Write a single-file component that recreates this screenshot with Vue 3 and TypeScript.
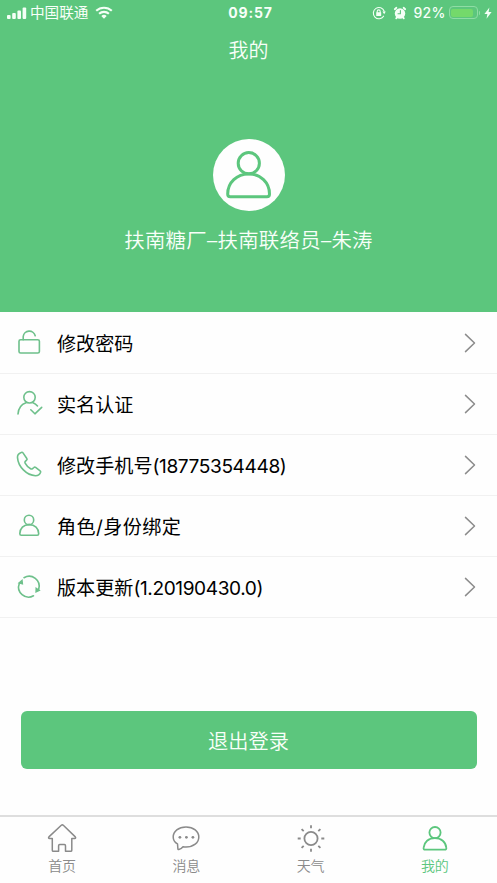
<script setup lang="ts">
  import { ref } from "vue";

  interface MenuItem {
    icon: string;
    label: string;
    extra?: string;
  }

  interface TabItem {
    key: string;
    label: string;
  }

  const userName = ref("扶南糖厂–扶南联络员–朱涛");
  const battery = ref(92);
  const activeTab = ref("mine");

  const menu: MenuItem[] = [
    { icon: "lock", label: "修改密码" },
    { icon: "verify", label: "实名认证" },
    { icon: "phone", label: "修改手机号", extra: "(18775354448)" },
    { icon: "role", label: "角色/身份绑定" },
    { icon: "update", label: "版本更新", extra: "(1.20190430.0)" },
  ];

  const tabs: TabItem[] = [
    { key: "home", label: "首页" },
    { key: "message", label: "消息" },
    { key: "weather", label: "天气" },
    { key: "mine", label: "我的" },
  ];
</script>

<template>
  <div class="page">
    <header class="header">
      <div class="status-bar">
        <div class="status-left">
          <svg class="signal" viewBox="0 0 20 12">
            <rect x="0" y="8" width="3.6" height="4" rx="1" />
            <rect x="5.2" y="6" width="3.6" height="6" rx="1" />
            <rect x="10.4" y="3.4" width="3.6" height="8.6" rx="1" />
            <rect x="15.6" y="0.6" width="3.6" height="11.4" rx="1" />
          </svg>
          <span class="carrier">中国联通</span>
          <svg class="wifi" viewBox="0 0 18 13">
            <path d="M1.2 4.8a11.4 11.4 0 0 1 15.6 0" />
            <path d="M4.1 7.8a7.2 7.2 0 0 1 9.8 0" />
            <path class="dot" d="M6.3 9.9a4 4 0 0 1 5.4 0L9 12.7z" />
          </svg>
        </div>
        <span class="time">09:57</span>
        <div class="status-right">
          <svg class="rotation" viewBox="0 0 14 14">
            <path d="M12.2 5.2a5.6 5.6 0 1 0-.6 5" />
            <path class="fill" d="M10.4 5.6h3.4l-1.6 2.6z" />
            <rect class="fill" x="4.2" y="6.2" width="5" height="3.8" rx=".5" />
            <path d="M5.2 6.5V5.4a1.5 1.5 0 0 1 3 0v1.1" />
          </svg>
          <svg class="alarm" viewBox="0 0 14 14">
            <circle cx="7" cy="7.5" r="5.2" />
            <path class="ear" d="M1.8 3.2 3.4 1.8M12.2 3.2l-1.6-1.4M3.2 12.4l1-1.2M10.8 12.4l-1-1.2" />
            <path class="hand" d="M7.4 4.6v3.2H5" />
          </svg>
          <span class="percent">{{ battery }}%</span>
          <div class="battery">
            <div class="level" :style="{ width: battery + '%' }"></div>
          </div>
          <span class="battery-tip"></span>
          <svg class="bolt" viewBox="0 0 8 12">
            <path d="M5.4.4.4 6.9h3L2.5 11.7 7.6 5H4.6z" />
          </svg>
        </div>
      </div>
      <h1 class="title">我的</h1>
      <div class="avatar">
        <svg viewBox="0 0 72 72">
          <circle cx="35.8" cy="24.2" r="10.6" />
          <path d="M17.3 57.8h36.6c1.9 0 2.6-1 2.6-2.8C56.5 43.5 47.5 34.9 35.7 34.9S14.7 43.5 14.7 55c0 1.8.7 2.8 2.6 2.8z" />
        </svg>
      </div>
      <p class="name">{{ userName }}</p>
    </header>

    <ul class="menu">
      <li v-for="item in menu" :key="item.icon" class="row" :class="item.icon">
        <svg class="row-icon" viewBox="0 0 30 30">
          <template v-if="item.icon === 'lock'">
            <rect x="5" y="11.7" width="20.4" height="13.3" rx="1.6" />
            <path d="M9.2 11.7V8.6a6.1 6.1 0 0 1 12-.8" />
          </template>
          <template v-else-if="item.icon === 'verify'">
            <circle cx="15.5" cy="8.3" r="5.7" />
            <path d="M4 25c.3-5.3 3.2-9.600 8-11.300M19 13.700c1.900.7 3.300 1.800 4.500 3.300" />
            <path d="m16.800 20.800 4.100 4 6.800-6.500" />
          </template>
          <template v-else-if="item.icon === 'phone'">
            <path d="M7.300 2.400C4.700 3.200 3.300 5 3.500 7.600 4.200 16.600 12.500 25.400 21.500 25.700c2.300 0 4.300-1.200 5.100-3.400.2-.6 0-1.100-.5-1.500l-4.500-3.400c-.6-.4-1.200-.4-1.700.1l-1.300 1.100c-.6.5-1.300.6-2 .2-2.500-1.500-4.300-3.300-5.500-5.600-.4-.7-.3-1.300.2-1.800l1.300-1.200c.6-.5.6-1.100.2-1.700L9 2.900c-.4-.6-1-.7-1.700-.5z" />
          </template>
          <template v-else-if="item.icon === 'role'">
            <circle cx="15" cy="8.900" r="4.700" />
            <path d="M7.300 24.200h15.900c1 0 1.500-.5 1.500-1.400 0-5.500-3.900-9.200-9.500-9.200s-9.400 3.700-9.400 9.200c0 .9.500 1.400 1.500 1.400z" />
          </template>
          <template v-else>
            <path d="M10 5.700a10 10 0 0 1 14.700 11.500M19.500 23.800A10 10 0 0 1 5.300 11.500" />
            <path class="solid" d="m3.600 11.300 5-4.300.6 5.800zM26.700 18.400l-5.400 2.500.2-6z" />
          </template>
        </svg>
        <span class="label">{{ item.label }}<span v-if="item.extra" class="extra">{{ item.extra }}</span></span>
        <svg class="arrow" viewBox="0 0 12 20">
          <path d="m1.500 1.400 9 8.600-9 8.600" />
        </svg>
      </li>
    </ul>

    <button class="logout">退出登录</button>

    <nav class="tabbar">
      <div
        v-for="tab in tabs"
        :key="tab.key"
        class="tab"
        :class="{ active: tab.key === activeTab }"
        @click="activeTab = tab.key"
      >
        <svg viewBox="0 0 30 30">
          <template v-if="tab.key === 'home'">
            <path d="M14.300 2.300 1.900 13.900c-.7.800-.3 1.600.6 1.600h2.800v11.700c0 .7.400 1.100 1.100 1.100h5.200v-5.600c0-.7.400-1.100 1.100-1.100h4.700c.7 0 1.100.4 1.100 1.100v5.600h5.200c.7 0 1.100-.4 1.100-1.100V15.500h2.900c.9 0 1.300-.8.600-1.600L16.300 2.300c-.7-.6-1.300-.6-2 0z" />
          </template>
          <template v-else-if="tab.key === 'message'">
            <path d="M6.500 20.900C3.600 19.400 2.200 17 2.200 14 2.200 8.200 7.500 4 15 4s12.800 4.200 12.800 10S22.500 24 15 24c-1 0-2-.1-3-.3-1.300 1.600-2.600 2.500-4.200 2.900-.6.100-.9-.2-.9-.8z" />
            <circle class="solid" cx="8.900" cy="14.300" r="1.400" />
            <circle class="solid" cx="15.400" cy="14.300" r="1.400" />
            <circle class="solid" cx="21.900" cy="14.300" r="1.400" />
          </template>
          <template v-else-if="tab.key === 'weather'">
            <circle class="sun" cx="15" cy="15.500" r="6.600" />
            <path class="sun" d="M15 2.200v3M15 25.800v3M1.700 15.500h3M25.300 15.500h3M5.600 6.100l2.100 2.100M22.300 22.800l2.100 2.100M24.400 6.100l-2.100 2.100M7.700 22.800l-2.100 2.100" />
          </template>
          <template v-else>
            <circle cx="15" cy="9.600" r="5.600" />
            <path d="M5.200 26.700h19.500c1.300 0 1.800-.7 1.600-2-.6-5.700-5-9.600-11.400-9.600S4.200 19 3.600 24.700c-.2 1.300.3 2 1.600 2z" />
          </template>
        </svg>
        <span>{{ tab.label }}</span>
      </div>
    </nav>
  </div>
</template>

<style>
  body {
    margin: 0;
    background-color: #fefefe;
  }
</style>

<style scoped>
  .page {
    display: flex;
    flex-direction: column;
    height: 883px;
    overflow: hidden;
    background-color: #fefefe;
    font-family: Inter, "Noto Sans CJK SC", sans-serif;
  }
  svg {
    display: block;
    flex: none;
    fill: none;
    stroke-linecap: round;
    stroke-linejoin: round;
  }
  .header {
    display: flex;
    flex-direction: column;
    align-items: center;
    flex: none;
    height: 312px;
    background-color: #5cc67d;
    color: #f8fff9;
  }
  .status-bar {
    display: grid;
    grid-template-columns: 1fr auto 1fr;
    align-items: center;
    box-sizing: border-box;
    width: 100%;
    height: 25px;
    padding: 0 5px 0 7px;
  }
  .status-left,
  .status-right {
    display: flex;
    align-items: center;
  }
  .status-right {
    justify-content: flex-end;
  }
  .signal {
    width: 20px;
    height: 12px;
    fill: #f4fff6;
  }
  .carrier {
    margin-left: 3px;
    font-size: 14.6px;
    line-height: 20px;
  }
  .wifi {
    width: 18px;
    height: 13px;
    margin-left: 7px;
    stroke: #f4fff6;
    stroke-width: 2.1;
    stroke-linecap: butt;
  }
  .wifi .dot {
    fill: #f4fff6;
    stroke: none;
  }
  .time {
    padding-left: 2px;
    font-size: 14px;
    font-weight: 700;
    letter-spacing: 0.8px;
  }
  .rotation {
    width: 14px;
    height: 14px;
    stroke: #f4fff6;
    stroke-width: 1.1;
  }
  .rotation .fill {
    fill: #f4fff6;
    stroke: none;
  }
  .alarm {
    width: 14px;
    height: 14px;
    margin-left: 7px;
    fill: #f4fff6;
  }
  .alarm .ear {
    stroke: #f4fff6;
    stroke-width: 1.8;
  }
  .alarm .hand {
    fill: none;
    stroke: #5cc67d;
    stroke-width: 1.1;
  }
  .percent {
    margin-left: 7px;
    font-size: 14px;
    font-weight: 500;
    letter-spacing: 0.2px;
  }
  .battery {
    box-sizing: border-box;
    width: 29px;
    height: 13px;
    margin-left: 3px;
    padding: 1.5px;
    border: 1px solid #8fdca5;
    border-radius: 4px;
  }
  .level {
    height: 100%;
    border-radius: 2px;
    background-color: #74d96b;
  }
  .battery-tip {
    width: 1.5px;
    height: 4px;
    margin-left: 1px;
    border-radius: 0 2px 2px 0;
    background-color: #8fdca5;
  }
  .bolt {
    width: 8px;
    height: 12px;
    margin-left: 4px;
    fill: #f4fff6;
  }
  .title {
    margin: 11px 0 0;
    font-size: 20px;
    font-weight: 350;
    line-height: 30px;
  }
  .avatar {
    width: 72px;
    height: 72px;
    margin-top: 73px;
    border-radius: 50%;
    background-color: #fefefe;
  }
  .avatar svg {
    width: 72px;
    height: 72px;
    stroke: #5cc67d;
    stroke-width: 3;
  }
  .name {
    margin: 15px 0 0;
    font-size: 20.4px;
    font-weight: 350;
    line-height: 30px;
    letter-spacing: 0.3px;
    white-space: nowrap;
  }
  .menu {
    flex: none;
    margin: 0;
    padding: 0.5px 0 0;
    list-style: none;
  }
  .row {
    display: flex;
    align-items: center;
    box-sizing: border-box;
    height: 61.1px;
    padding: 0 21px 0 14px;
    border-bottom: 1px solid #f1f1f1;
  }
  .row-icon {
    width: 30px;
    height: 30px;
    stroke: #6ec08b;
    stroke-width: 1.6;
  }
  .row-icon .solid {
    fill: #6ec08b;
    stroke: none;
  }
  .label {
    flex: 1;
    margin-left: 13px;
    padding-top: 3px;
    color: #000;
    font-size: 19.1px;
    line-height: 28px;
  }
  .role .label {
    letter-spacing: 0.4px;
  }
  .extra {
    letter-spacing: -0.4px;
  }
  .arrow {
    width: 12px;
    height: 20px;
    stroke: #8c8c8c;
    stroke-width: 1.5;
  }
  .logout {
    flex: none;
    height: 58px;
    margin: 93px 20.5px 0;
    padding: 1px 0 0;
    border: 0;
    border-radius: 6px;
    background-color: #5cc67d;
    color: #f8fff9;
    font-family: inherit;
    font-size: 20.2px;
    font-weight: 350;
  }
  .tabbar {
    display: flex;
    box-sizing: border-box;
    height: 68px;
    margin-top: auto;
    border-top: 2px solid #dedede;
  }
  .tab {
    display: flex;
    flex: 1;
    flex-direction: column;
    align-items: center;
    padding-top: 6px;
    color: #8a8a8a;
    font-size: 14px;
    font-weight: 350;
    line-height: 20px;
  }
  .tab svg {
    width: 30px;
    height: 30px;
    margin-bottom: 3px;
    stroke: currentColor;
    stroke-width: 1.5;
  }
  .tab .solid {
    fill: currentColor;
    stroke: none;
  }
  .tab .sun {
    stroke-width: 1.8;
    stroke-linecap: butt;
  }
  .tab.active {
    color: #5cc67d;
  }
  .tab.active svg {
    stroke-width: 1.8;
  }
</style>
